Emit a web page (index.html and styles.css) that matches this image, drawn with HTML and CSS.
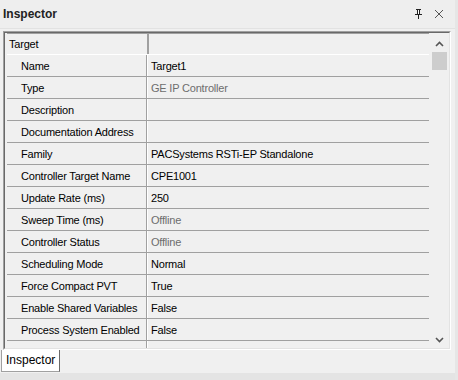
FILE: index.html
```html
<!DOCTYPE html>
<html lang="en">
<head>
    <meta charset="UTF-8">
    <title>Inspector</title>
    <link rel="stylesheet" href="styles.css">
</head>
<body>
    <div class="window">
        <div class="titlebar">
            <span class="title">Inspector</span>
            <span class="title-buttons">
                <svg class="pin" width="9" height="10" viewBox="0 0 9 10">
                    <path d="M2 0h5v1H6v4h2v1H5v4H4V6H1V5h2V1H2z" fill="#222"/>
                    <path d="M4 1h1v4H4z" fill="#fff"/>
                </svg>
                <svg class="close" width="10" height="10" viewBox="0 0 10 10">
                    <path d="M1 1l8 8M9 1l-8 8" stroke="#555" stroke-width="1"/>
                </svg>
            </span>
        </div>
        <div class="panel">
            <div class="grid">
                <div class="rows">
                    <div class="row category"><div class="name">Target</div><div class="value"></div></div>
                    <div class="row"><div class="name">Name</div><div class="value">Target1</div></div>
                    <div class="row"><div class="name">Type</div><div class="value readonly">GE IP Controller</div></div>
                    <div class="row"><div class="name">Description</div><div class="value"></div></div>
                    <div class="row"><div class="name">Documentation Address</div><div class="value"></div></div>
                    <div class="row"><div class="name">Family</div><div class="value">PACSystems RSTi-EP Standalone</div></div>
                    <div class="row"><div class="name">Controller Target Name</div><div class="value">CPE1001</div></div>
                    <div class="row"><div class="name">Update Rate (ms)</div><div class="value">250</div></div>
                    <div class="row"><div class="name">Sweep Time (ms)</div><div class="value readonly">Offline</div></div>
                    <div class="row"><div class="name">Controller Status</div><div class="value readonly">Offline</div></div>
                    <div class="row"><div class="name">Scheduling Mode</div><div class="value">Normal</div></div>
                    <div class="row"><div class="name">Force Compact PVT</div><div class="value">True</div></div>
                    <div class="row"><div class="name">Enable Shared Variables</div><div class="value">False</div></div>
                    <div class="row"><div class="name">Process System Enabled</div><div class="value">False</div></div>
                    <div class="row"><div class="name">PLC Heartbeat (ms)</div><div class="value">1000</div></div>
                </div>
                <div class="scrollbar">
                    <div class="arrow">
                        <svg width="9" height="6" viewBox="0 0 9 6"><path d="M1 5l3.5-3.5L8 5" fill="none" stroke="#555" stroke-width="1.6"/></svg>
                    </div>
                    <div class="track"><div class="thumb"></div></div>
                    <div class="arrow">
                        <svg width="9" height="6" viewBox="0 0 9 6"><path d="M1 1l3.5 3.5L8 1" fill="none" stroke="#555" stroke-width="1.6"/></svg>
                    </div>
                </div>
            </div>
        </div>
        <div class="tabs">
            <div class="tab">Inspector</div>
        </div>
    </div>
</body>
</html>
```

FILE: styles.css
```css
body {
    margin: 0;
    background-color: #f0f0f0;
    font-family: "Liberation Sans", Arial, sans-serif;
    font-size: 11px;
    letter-spacing: -0.2px;
    color: #000;
}
.window {
    width: 458px;
    height: 380px;
    display: flex;
    flex-direction: column;
    background-color: #f0f0f0;
    border-right: 3px solid #e6e6e6;
    box-sizing: border-box;
}
.titlebar {
    height: 28px;
    display: flex;
    align-items: center;
    justify-content: space-between;
    padding: 0 11px 0 3px;
    background-color: #eeeeee;
    border-bottom: 1px solid #e2e2e2;
    flex-shrink: 0;
}
.title {
    font-weight: bold;
    font-size: 12px;
    letter-spacing: 0;
    color: #222;
}
.title-buttons {
    display: flex;
    align-items: center;
    gap: 11px;
}
.panel {
    margin: 2px 4px 0 3px;
    height: 319px;
    border: 1px solid #a0a0a0;
    border-right-color: #fff;
    border-bottom-color: #fff;
    box-sizing: border-box;
    flex-shrink: 0;
}
.grid {
    display: flex;
    height: 100%;
    border: 1px solid #696969;
    border-right-color: #e3e3e3;
    border-bottom-color: #e3e3e3;
    box-sizing: border-box;
    overflow: hidden;
}
.rows {
    flex: 1;
    overflow: hidden;
    padding-left: 2px;
}
.row {
    display: flex;
    height: 22px;
    border-bottom: 1px solid #a0a0a0;
    box-sizing: border-box;
}
.row .name {
    width: 140px;
    padding: 2px 0 0 14px;
    line-height: 19px;
    border-right: 1px solid #a0a0a0;
    white-space: nowrap;
    overflow: hidden;
    flex-shrink: 0;
    box-sizing: border-box;
}
.row .value {
    flex: 1;
    padding: 2px 0 0 3px;
    line-height: 19px;
    border-left: 1px solid #fff;
    white-space: nowrap;
}
.row.category {
    border-top: 1px solid #a0a0a0;
    border-bottom-color: #fff;
}
.row.category .name {
    padding: 1px 0 0 2px;
    border-right: none;
}
.row.category .value {
    border-left: 2px solid #a0a0a0;
}
.value.readonly {
    color: #6d6d6d;
}
.scrollbar {
    width: 17px;
    display: flex;
    flex-direction: column;
    background-color: #f0f0f0;
    margin: 2px 1px 0 2px;
}
.arrow {
    height: 17px;
    display: flex;
    align-items: center;
    justify-content: center;
}
.track {
    flex: 1;
}
.thumb {
    height: 18px;
    background-color: #cdcdcd;
    margin: 0 1px;
}
.tabs {
    flex: 1;
    display: flex;
    align-items: flex-start;
    padding-left: 1px;
    border-bottom: 7px solid #e4e4e4;
}
.tab {
    height: 22px;
    padding: 0 4px;
    line-height: 21px;
    font-size: 12px;
    letter-spacing: 0;
    background-color: #ffffff;
    border: 1px solid #a0a0a0;
    border-top: none;
    border-right: 1px solid #696969;
    box-sizing: border-box;
}
```
